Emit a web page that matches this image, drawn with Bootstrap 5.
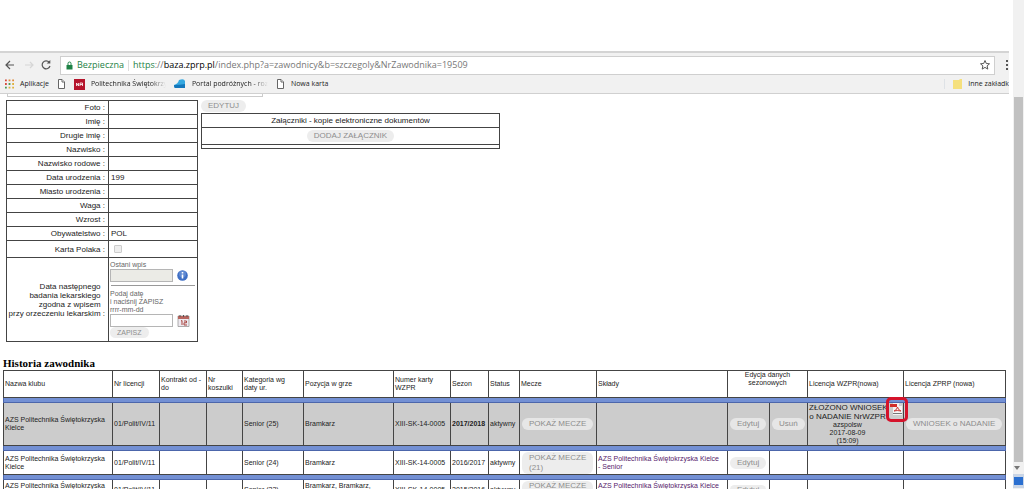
<!DOCTYPE html>
<html lang="pl">
<head>
<meta charset="utf-8">
<meta name="viewport" content="width=device-width, initial-scale=1">
<title>Historia zawodnika</title>
<link href="https://cdn.jsdelivr.net/npm/bootstrap@5.3.0/dist/css/bootstrap.min.css" rel="stylesheet">
<style>
body{font:8px/8px "Liberation Sans",Arial,sans-serif;color:#222;background:#fff}
.chrome{background:#f1f1f1;border-top:2px solid #d4d4d4;border-bottom:1px solid #d0d0d0;margin-top:51px;font-family:"Open Sans",sans-serif}
.bar-url{height:22px;padding:2px 0 0 4px}
.nav-btn{border:0;background:none;padding:0;width:12px;height:12px;display:flex}
.omni{background:#fff;border:1px solid #cfcfcf;height:19px;padding:0 3px 0 5px;font-size:9px;line-height:16px;color:#777}
.omni .safe{color:#1e8246}
.omni .vr{margin:3px 4px}
.bar-marks{height:18px;font-size:7px;line-height:10px;padding-left:5px}
.bar-marks a{color:#222;text-decoration:none;display:flex;align-items:center;white-space:nowrap;gap:6px}
.fade-end{overflow:hidden;-webkit-mask-image:linear-gradient(90deg,#000 80%,transparent);mask-image:linear-gradient(90deg,#000 80%,transparent)}
.stub{height:3px;width:256px;margin-left:7px;border:1px solid #ccc;border-top:0}
.top-part{margin-top:3px;padding-left:6px;gap:3px}
table{border-collapse:collapse}
.player{width:192px;table-layout:fixed}
.player th,.player td{border:1px solid #444;height:14px;padding:0 2px;font-weight:400}
.player th{text-align:right;line-height:9px;padding:0 3px 0 0;white-space:nowrap}
.player .tall th,.player .tall td{height:17px}
.player .med th,.player .med td{height:84px}
.player .med td{padding:0 1px;font-size:7px;line-height:8px;color:#666}
.fld{width:63px;height:13px;border:1px solid #b5b5b5;padding:0 2px;font-size:7px;background:#fff}
.fld:disabled{background:#ebebe6}
.tick{appearance:none;width:8px;height:8px;border:1px solid #ccc;background:#eee;border-radius:1px;margin:0 0 0 3px;display:block}
.split{border:0;border-top:1px solid #999;opacity:1;margin:3px 1px 4px 1px}
.pill{border:0;border-radius:6px;background:#ededed;color:#8d8d8d;font-size:8px;line-height:10px;padding:1px 7px;text-align:left;white-space:nowrap}
.pill.tiny{font-size:7px;line-height:9px}
.attach{width:299px;margin-top:1px}
.attach th,.attach td{border:1px solid #444;padding:0;text-align:center;font-weight:400;height:14px}
.attach .mid td{height:17px}
.attach .thin td{height:4px}
.past{margin:15px 4px 0 3px}
h1{font:bold 11px/13px "Liberation Serif",serif;color:#000;margin:0}
.hist{width:100%;table-layout:fixed;font-size:7px}
.hist th,.hist td{border:1px solid #444;padding:0 1px;font-weight:400;vertical-align:middle;height:24px}
.hist thead th{height:27px}
.hist .now td{background:#ccc;height:43px}
.hist .now .pill{background:#e6e6e6}
.hist .sep td{height:5px;padding:0;background:#7390d4;border:1px solid #4c66ab}
.hist a{color:#551a6b;text-decoration:none}
.hist .pill{margin-left:1px}
.hist .low td{height:20px}
.hist .low .pill{padding-top:0;padding-bottom:0;line-height:9px}
.req{font-size:8px;line-height:9px;white-space:nowrap}
.mark-red{position:absolute;right:-5px;top:-6px;width:22px;height:25px;border:3px solid #d5132b;border-radius:5px;padding:3px 1px}
.mark-red svg{display:block}
.rail{width:11px;background:#f1f1f1}
.rail .thumb{background:#c1c1c1;flex:0 1 365px;margin:97px 0 0 1px;width:9px}
</style>
</head>
<body>
<div class="d-flex vh-100 overflow-hidden">
<div class="flex-grow-1 overflow-hidden me-1" style="min-width:0">
<header class="chrome overflow-hidden">
 <div class="bar-url d-flex align-items-center">
  <button class="nav-btn" aria-label="Wstecz"><svg width="12" height="12" viewBox="0 0 12 12" fill="none" stroke="#555" stroke-width="1.2"><path d="M10 6H2M6 2L2 6l4 4"/></svg></button>
  <button class="nav-btn ms-2" aria-label="Dalej"><svg width="12" height="12" viewBox="0 0 12 12" fill="none" stroke="#d6d6d6" stroke-width="1.2"><path d="M1 6h8M6 3l3 3-3 3"/></svg></button>
  <button class="nav-btn ms-1 me-2" aria-label="Odśwież"><svg width="12" height="12" viewBox="0 0 12 12" fill="none" stroke="#555" stroke-width="1.2"><path d="M9.2 3.2A4 4 0 1 0 10 7"/><path d="M10.3 1v3.6H6.700z" fill="#555" stroke="none"/></svg></button>
  <div class="omni d-flex align-items-center flex-grow-1">
   <svg width="7" height="9" viewBox="0 0 7 9"><path d="M.5 4h6v4.500h-6z" fill="#1e8246"/><path d="M2 4V2.500a1.500 1.500 0 0 1 3 0V4" fill="none" stroke="#1e8246"/></svg>
   <span class="safe ms-1">Bezpieczna</span><span class="vr align-self-stretch"></span>
   <span class="flex-grow-1"><span class="safe">https</span>://<span class="text-black">baza.zprp.pl</span>/index.php?a=zawodnicy&amp;b=szczegoly&amp;NrZawodnika=19509</span>
   <svg width="12" height="12" viewBox="0 0 12 12" fill="none" stroke="#555"><path d="M6 1.500l1.300 3 3.200.3-2.400 2.100.7 3.200L6 8.400l-2.800 1.700.7-3.200-2.400-2.100 3.200-.3z"/></svg>
  </div>
  <svg class="ms-2" width="6" height="12" viewBox="0 0 6 12" fill="#555"><path d="M3 1h2v2H3zM3 5h2v2H3zM3 9h2v2H3z"/></svg>
 </div>
 <nav class="bar-marks d-flex align-items-center">
  <a href="#"><svg width="9" height="10" viewBox="0 0 10 10"><path d="M0 0h2v2H0zM0 4h2v2H0z" fill="#d64b3c"/><path d="M4 0h2v2H4zM8 0h2v2H8z" fill="#e08a3a"/><path d="M0 8h2v2H0zM4 4h2v2H4z" fill="#4b9b55"/><path d="M8 4h2v2H8zM4 8h2v2H4zM8 8h2v2H8z" fill="#dfb23e"/></svg>Aplikacje</a>
  <a href="#" class="ms-2" aria-label="Karta"><svg width="9" height="10" viewBox="0 0 9 10" fill="#fff" stroke="#666"><path d="M1.500.5H5L7.500 3v6.500h-6z"/><path d="M5 .5V3h2.500"/></svg></a>
  <a href="#" class="ms-2"><svg width="11" height="11" viewBox="0 0 11 11"><path d="M0 0h11v11H0z" fill="#b5142c"/><path d="M2.500 7V4l2 3V4M6 7V4h2.500v3M6 5.500h2.500" fill="none" stroke="#fff" stroke-width=".8"/></svg><span class="fade-end" style="width:75px">Politechnika Świętokrzy</span></a>
  <a href="#" class="ms-2"><svg width="12" height="10" viewBox="0 0 12 10"><path d="M0 6Q4 5 5 1q5-2 6 1v7H1Q0 9 0 6z" fill="#35a8e0"/><path d="M0 6q6 0 11-1v4H1Q0 9 0 6z" fill="#1377bb"/></svg><span class="fade-end" style="width:76px">Portal podróżnych - roz</span></a>
  <a href="#" class="ms-2"><svg width="9" height="10" viewBox="0 0 9 10" fill="#fff" stroke="#666"><path d="M1.500.5H5L7.500 3v6.500h-6z"/><path d="M5 .5V3h2.500"/></svg>Nowa karta</a>
  <a href="#" class="ms-auto border-start ps-2"><svg width="9" height="10" viewBox="0 0 9 10"><path d="M0 1h6l1-1h2v10H0z" fill="#f5e07d"/></svg>Inne zakładk</a>
 </nav>
</header>
<main>
 <div class="stub"></div>
 <div class="top-part d-flex align-items-start">
  <table class="player">
   <colgroup><col style="width:102px"><col></colgroup>
   <tr><th>Foto :</th><td></td></tr>
   <tr><th>Imię :</th><td></td></tr>
   <tr><th>Drugie imię :</th><td></td></tr>
   <tr><th>Nazwisko :</th><td></td></tr>
   <tr><th>Nazwisko rodowe :</th><td></td></tr>
   <tr><th>Data urodzenia :</th><td>199</td></tr>
   <tr><th>Miasto urodzenia :</th><td></td></tr>
   <tr><th>Waga :</th><td></td></tr>
   <tr><th>Wzrost :</th><td></td></tr>
   <tr><th>Obywatelstwo :</th><td>POL</td></tr>
   <tr class="tall"><th><label for="kp">Karta Polaka :</label></th><td><input id="kp" class="tick" type="checkbox" disabled></td></tr>
   <tr class="med"><th>Data następnego&nbsp;&nbsp;<br>badania lekarskiego&nbsp;&nbsp;<br>zgodna z wpisem&nbsp;&nbsp;<br>przy orzeczeniu lekarskim :</th>
    <td><label class="d-block" for="last">Ostani wpis</label>
     <div class="d-flex align-items-center"><input id="last" class="fld" type="text" disabled>
      <svg class="ms-1" width="11" height="11" viewBox="0 0 11 11"><circle cx="5.500" cy="5.500" r="5.300" fill="#3f6fc4"/><circle cx="5.500" cy="4" r="3.500" fill="#7fa3e0" opacity=".5"/><path d="M4.700 4.500h1.600v4H4.700zM4.700 2h1.600v1.500H4.700z" fill="#fff"/></svg></div>
     <hr class="split">
     <label class="d-block" for="next">Podaj datę<br>i naciśnij ZAPISZ<br>rrrr-mm-dd</label>
     <div class="d-flex align-items-center"><input id="next" class="fld" type="text">
      <svg class="ms-1" width="13" height="12" viewBox="0 0 13 12"><path d="M1 1h11v10.500H1z" fill="#eeeaf0" stroke="#999" stroke-width=".8"/><path d="M1 1h11v3H1z" fill="#b8655f"/><path d="M3 0v2M6.500 0v2M10 0v2" stroke="#555"/><path d="M4 6l1-.5V10M7 6h2.500v1.800H7V10h3" fill="none" stroke="#a8443f"/></svg></div>
     <button class="pill tiny" type="button">ZAPISZ</button></td></tr>
  </table>
  <div class="d-flex flex-column align-items-start">
   <button class="pill" type="button">EDYTUJ</button>
   <table class="attach">
    <tr><th>Załączniki - kopie elektroniczne dokumentów</th></tr>
    <tr class="mid"><td><button class="pill" type="button">DODAJ ZAŁĄCZNIK</button></td></tr>
    <tr class="thin"><td></td></tr>
   </table>
  </div>
 </div>
 <section class="past">
  <h1>Historia zawodnika</h1>
  <table class="hist">
   <colgroup><col style="width:109px"><col style="width:47px"><col style="width:47px"><col style="width:36px"><col style="width:61px"><col style="width:90px"><col style="width:57px"><col style="width:38px"><col style="width:31px"><col style="width:77px"><col style="width:131px"><col style="width:42px"><col style="width:38px"><col style="width:96px"><col style="width:102px"></colgroup>
   <thead><tr><th>Nazwa klubu</th><th>Nr licencji</th><th>Kontrakt od - do</th><th>Nr koszulki</th><th>Kategoria wg<br>daty ur.</th><th>Pozycja w grze</th><th>Numer karty WZPR</th><th>Sezon</th><th>Status</th><th>Mecze</th><th>Składy</th><th colspan="2" class="text-center align-top">Edycja danych<br>sezonowych</th><th>Licencja WZPR(nowa)</th><th>Licencja ZPRP (nowa)</th></tr></thead>
   <tbody>
   <tr class="sep"><td colspan="15"></td></tr>
   <tr class="now"><td>AZS Politechnika Świętokrzyska Kielce</td><td>01/Polit/IV/11</td><td></td><td></td><td>Senior (25)</td><td>Bramkarz</td><td>XIII-SK-14-0005</td><td class="fw-bold">2017/2018</td><td>aktywny</td><td><button class="pill" type="button">POKAŻ MECZE</button></td><td></td><td><button class="pill" type="button">Edytuj</button></td><td><button class="pill" type="button">Usuń</button></td>
    <td class="position-relative"><div class="text-center pe-3"><div class="req">ZŁOŻONO WNIOSEK<br>o NADANIE NrWZPR</div>azspolsw<br>2017-08-09<br>(15:09)</div>
     <a href="#" class="mark-red" aria-label="PDF"><svg width="13" height="12" viewBox="0 0 13 12"><path d="M3 0h6l3 3v9H3z" fill="#f6f3f3"/><path d="M9 0v3h3" fill="#ccc"/><path d="M0 1h7v3H0z" fill="#d22e2a"/><path d="M4 8q3-1 3.500-4Q8 7 11 8 7 7 4 8z" fill="none" stroke="#cc3c38"/><path d="M3 10.500h9" stroke="#777"/></svg></a></td>
    <td><button class="pill" type="button">WNIOSEK o NADANIE</button></td></tr>
   <tr class="sep"><td colspan="15"></td></tr>
   <tr><td>AZS Politechnika Świętokrzyska Kielce</td><td>01/Polit/IV/11</td><td></td><td></td><td>Senior (24)</td><td>Bramkarz</td><td>XIII-SK-14-0005</td><td>2016/2017</td><td>aktywny</td><td><button class="pill" type="button">POKAŻ MECZE<br>(21)</button></td><td><a href="#">AZS Politechnika Świętokrzyska Kielce<br>- Senior</a></td><td><button class="pill" type="button">Edytuj</button></td><td></td><td></td><td></td></tr>
   <tr class="sep"><td colspan="15"></td></tr>
   <tr class="low"><td>AZS Politechnika Świętokrzyska Kielce</td><td>01/Polit/IV/11</td><td></td><td></td><td>Senior (23)</td><td>Bramkarz, Bramkarz,<br>Bramkarz</td><td>XIII-SK-14-0005</td><td>2015/2016</td><td>aktywny</td><td><button class="pill" type="button">POKAŻ MECZE<br>(20)</button></td><td><a href="#">AZS Politechnika Świętokrzyska Kielce<br>- Senior</a></td><td><button class="pill" type="button">Edytuj</button></td><td></td><td></td><td></td></tr>
   </tbody>
  </table>
 </section>
</main>
</div>
<aside class="rail d-flex flex-column flex-shrink-0">
 <div class="thumb"></div>
 <svg class="mt-1 ms-auto me-1" width="6" height="4" viewBox="0 0 6 4"><path d="M0 0h6L3 4z" fill="#777"/></svg>
 <svg class="mt-1" width="11" height="14" viewBox="0 0 11 14"><path d="M0 0h11v14H0z" fill="#c9d5e6"/><path d="M1 3h9v8H1z" fill="#2a6fd0"/></svg>
</aside>
</div>
<script src="https://cdn.jsdelivr.net/npm/bootstrap@5.3.0/dist/js/bootstrap.bundle.min.js"></script>
</body>
</html>
